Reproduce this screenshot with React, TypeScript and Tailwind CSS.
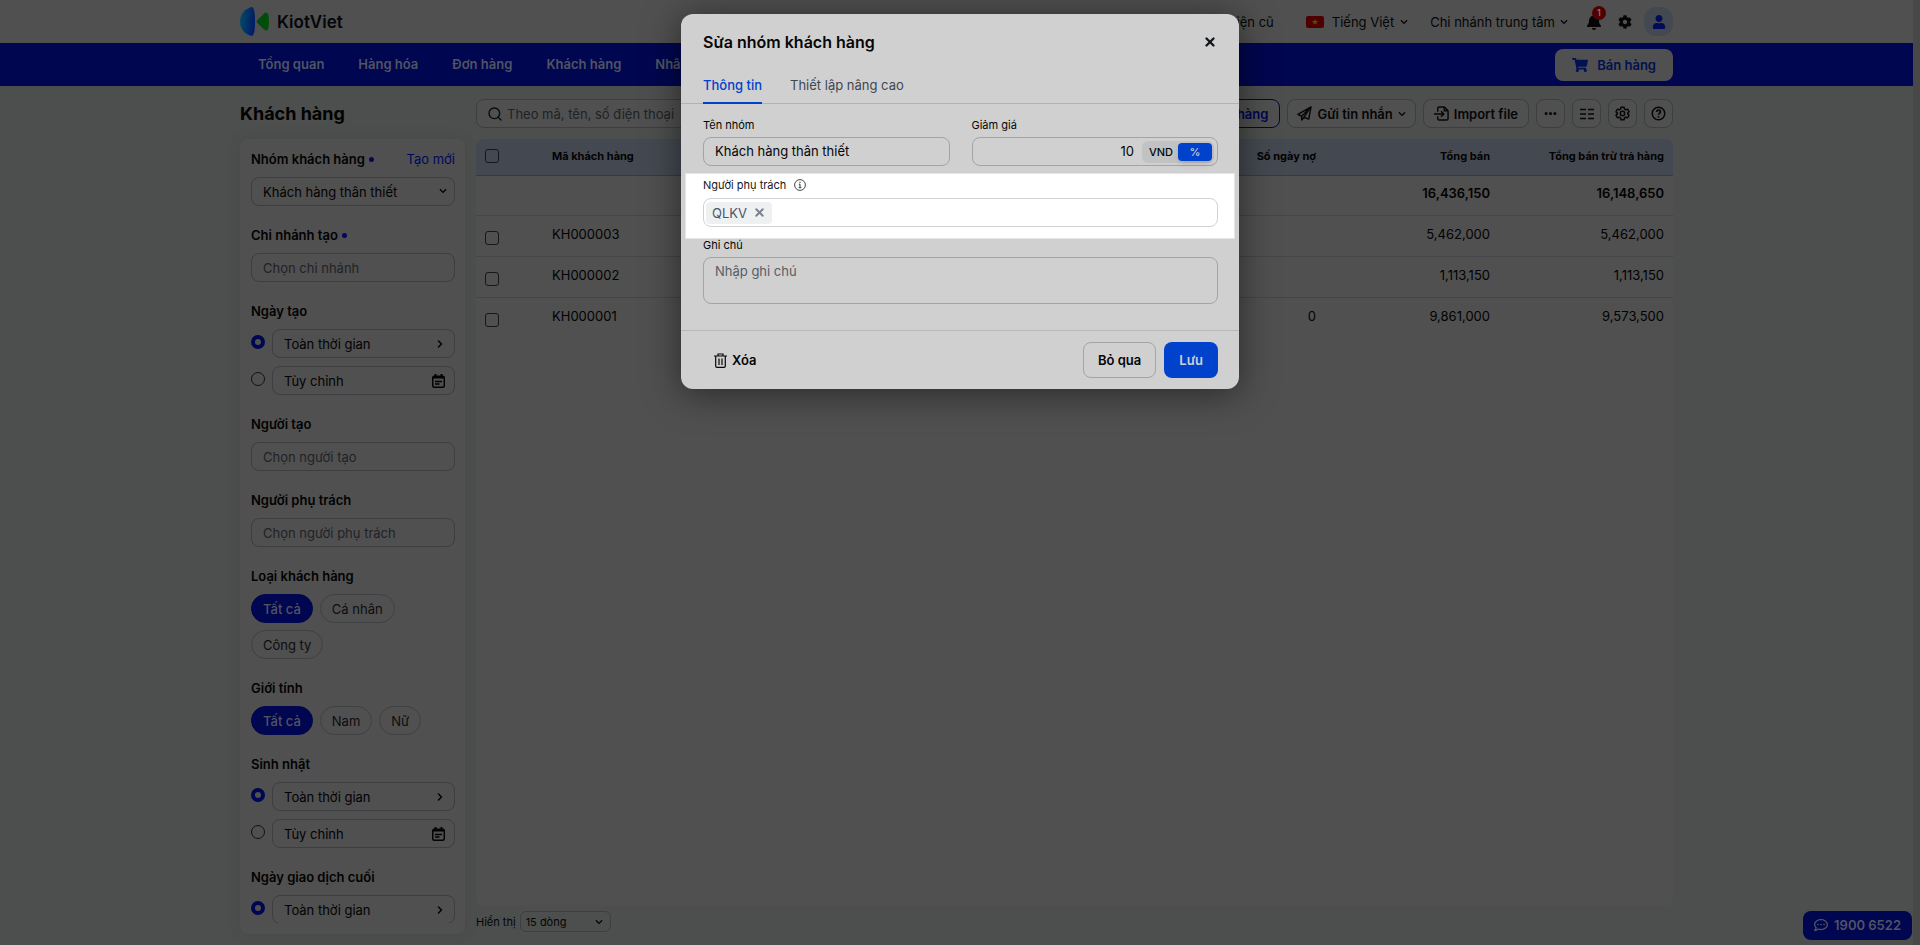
import { useState } from 'react';
import type { ReactNode } from 'react';
import { FaShoppingCart, FaUser, FaCog, FaRegCommentDots, FaBell, FaChevronDown } from 'react-icons/fa';
import { Search, Ellipsis, X, ChevronRight } from 'lucide-react';

const navItems = ['Tổng quan', 'Hàng hóa', 'Đơn hàng', 'Khách hàng', 'Nhân viên'];

const rows = [
    { code: 'KH000003', days: '', total: '5,462,000', net: '5,462,000' },
    { code: 'KH000002', days: '', total: '1,113,150', net: '1,113,150' },
    { code: 'KH000001', days: '0', total: '9,861,000', net: '9,573,500' },
];

const Logo = () => (
    <a href="#" className="flex items-center gap-2">
        <svg width="29" height="29" viewBox="0 0 29 29" aria-hidden="true">
            <defs>
                <linearGradient id="logoBlue" x1="0" x2="1" y1="0.3" y2="0.5">
                    <stop offset="0" stopColor="#064a66" />
                    <stop offset="1" stopColor="#001a66" />
                </linearGradient>
            </defs>
            <path d="M11 0.2C13.6 -0.5 14.9 3 15 14.5C14.9 26 13.6 29.5 11 28.8C4.5 27 0 22 0 14.5S4.5 2 11 0.2Z" fill="url(#logoBlue)" />
            <path d="M17.3 13.2L24 6.5C26 4.6 27.7 5.2 28.3 8C29.2 12 29.2 17 28.3 21C27.7 23.8 26 24.4 24 22.5L17.3 15.8C16.5 15 16.5 14 17.3 13.2Z" fill="#004d08" />
        </svg>
        <span className="text-[17px] font-semibold text-[#04060c]">KiotViet</span>
    </a>
);

const TopBar = () => (
    <header className="flex h-[43px] shrink-0 items-center justify-between bg-[#505050] px-60">
        <Logo />
        <div className="flex items-center text-[#050505]">
            <a href="#" className="mr-8">Giao diện cũ</a>
            <button type="button" className="mr-[22px] flex items-center gap-1.5">
                <svg width="18" height="12" viewBox="0 0 18 12" className="mr-0.5" aria-hidden="true">
                    <rect width="18" height="12" rx="2" fill="#4e0000" />
                    <path d="M9 2.8l.9 2.2h2.300l-1.800 1.400.7 2.300L9 7.300 6.900 8.700l.7-2.300L5.800 5h2.300z" fill="#5c4a00" />
                </svg>
                Tiếng Việt
                <FaChevronDown size={8} />
            </button>
            <button type="button" className="mr-[18px] flex items-center gap-[5px]">
                Chi nhánh trung tâm
                <FaChevronDown size={8} />
            </button>
            <button type="button" aria-label="Thông báo" className="relative mr-4">
                <FaBell size={16} />
                <span className="absolute -top-2 left-1.5 flex size-3.5 items-center justify-center rounded-full bg-[#500000] text-[9px] font-semibold text-[#777]">1</span>
            </button>
            <button type="button" aria-label="Thiết lập" className="mr-3"><FaCog size={14} /></button>
            <button type="button" aria-label="Tài khoản" className="flex size-[29px] items-center justify-center rounded-xl bg-[#444951] text-[#000c58]">
                <FaUser size={14} />
            </button>
        </div>
    </header>
);

const NavBar = () => (
    <nav className="flex h-[43px] shrink-0 items-center justify-between bg-[#00064f] px-60">
        <div className="flex pb-px pl-px">
            {navItems.map(item => (
                <a key={item} href="#" className="px-[17px] font-semibold text-[#505463]">{item}</a>
            ))}
        </div>
        <button type="button" className="flex h-8 items-center gap-[9px] rounded-lg bg-[#505050] px-[17px] font-semibold text-[#00124f]">
            <FaShoppingCart size={16} />
            Bán hàng
        </button>
    </nav>
);

const ToolButton = ({ label, children }: { label: string; children: ReactNode }) => (
    <button type="button" aria-label={label} className="flex size-[29px] items-center justify-center rounded-lg border border-[#3c3e42] bg-[#505050]">
        {children}
    </button>
);

const Toolbar = () => (
    <div className="flex items-center gap-[11px]">
        <h1 className="w-[225px] shrink-0 text-lg leading-7 font-bold text-[#020202]">Khách hàng</h1>
        <div className="flex min-w-0 flex-1 items-center justify-between">
            <label className="flex h-[29px] w-96 items-center gap-1 rounded-lg border border-[#3c3e42] bg-[#505050] pl-2.5">
                <Search size={16} className="text-[#08090b]" />
                <input type="text" aria-label="Tìm kiếm" placeholder="Theo mã, tên, số điện thoại" className="min-w-0 flex-1 outline-none placeholder:text-[#202226]" />
            </label>
            <div className="flex gap-[7px] text-[#050607]">
                <button type="button" className="h-[29px] rounded-lg border border-[#00064f] bg-[#505050] px-[11px] font-semibold text-[#00064f]">+ Khách hàng</button>
                <button type="button" className="flex h-[29px] items-center gap-[5px] rounded-lg border border-[#3c3e42] bg-[#505050] px-[9px] font-semibold">
                    <svg width="15" height="15" viewBox="0 0 16 16" fill="none" stroke="currentColor" strokeWidth="1.5" strokeLinejoin="round" aria-hidden="true">
                        <path d="M15 1L1 9l4 2 8.5-8.500L7.500 11.800 12.500 14 15 1zM5 11v4l2.500-3" />
                    </svg>
                    Gửi tin nhắn
                    <FaChevronDown size={8} />
                </button>
                <button type="button" className="flex h-[29px] items-center gap-[5px] rounded-lg border border-[#3c3e42] bg-[#505050] px-2.5 font-semibold">
                    <svg width="15" height="15" viewBox="0 0 16 16" fill="none" stroke="currentColor" strokeWidth="1.5" aria-hidden="true">
                        <path d="M4 6V2.500Q4 1 5.500 1H11l4 4v8.500q0 1.500-1.500 1.500h-8Q4 15 4 13.500V11M0 8.500h10M7.500 5.500l3 3-3 3M11 1v4h4" />
                    </svg>
                    Import file
                </button>
                <ToolButton label="Thêm"><Ellipsis size={15} strokeWidth={3} /></ToolButton>
                <ToolButton label="Cột hiển thị">
                    <svg width="14" height="12" viewBox="0 0 14 12" stroke="currentColor" strokeWidth="1.300" aria-hidden="true">
                        <path d="M0 1.500h6M8 1.500h6M0 6h6M8 6h6M0 10.500h6M8 10.500h6" />
                    </svg>
                </ToolButton>
                <ToolButton label="Tùy chỉnh">
                    <svg width="15" height="15" viewBox="0 0 24 24" fill="none" stroke="currentColor" strokeWidth="2.400" strokeLinejoin="round" aria-hidden="true">
                        <path d="M9.500 2h5l.7 3 2 1.100 3-.9 2.300 4-2.200 2.200v1.200l2.200 2.200-2.300 4-3-.9-2 1.100-.7 3h-5l-.7-3-2-1.100-3 .9-2.300-4 2.200-2.200v-1.200L1.500 9.200l2.300-4 3 .9 2-1.100z" />
                        <circle cx="12" cy="12" r="3.500" />
                    </svg>
                </ToolButton>
                <ToolButton label="Trợ giúp">
                    <svg width="15" height="15" viewBox="0 0 24 24" fill="none" stroke="currentColor" aria-hidden="true">
                        <circle cx="12" cy="12" r="10" strokeWidth="2.400" />
                        <path d="M9 9.500c0-4 6-3.800 6 0 0 2.200-3 2.200-3 4.500M12 16v2.500" strokeWidth="2.600" />
                    </svg>
                </ToolButton>
            </div>
        </div>
    </div>
);

const Section = ({ title, dot, action, children }: { title: string; dot?: boolean; action?: string; children: ReactNode }) => (
    <section className="mb-5 last:mb-0">
        <div className="mb-[9px] flex h-[18px] items-center justify-between">
            <h2 className="flex items-center gap-1 font-semibold text-[#020202]">
                {title}
                {dot && <span className="size-[5px] rounded-full bg-[#00085c]" />}
            </h2>
            {action && <a href="#" className="text-[#00085c]">{action}</a>}
        </div>
        {children}
    </section>
);

const FilterInput = ({ placeholder }: { placeholder: string }) => (
    <input
        type="text"
        aria-label={placeholder}
        placeholder={placeholder}
        className="block h-[29px] w-full rounded-lg border border-[#3c3e42] px-[11px] outline-none placeholder:text-[#202226]"
    />
);

const CalendarIcon = () => (
    <svg width="13" height="14" viewBox="0 0 13 14" fill="none" stroke="currentColor" strokeWidth="1.500" aria-hidden="true">
        <rect x="0.750" y="2.250" width="11.500" height="11" rx="1.500" />
        <path d="M1 3.500h11M3.500 0v3M9.500 0v3" strokeWidth="2" />
        <path d="M3 7.500h7M3 10h4.500" />
    </svg>
);

const DateFilter = ({ name, options = ['Toàn thời gian', 'Tùy chỉnh'] }: { name: string; options?: string[] }) => (
    <div className="space-y-2">
        {options.map((label, i) => (
            <div key={label} className="flex items-center gap-[7px]">
                <input
                    type="radio"
                    name={name}
                    aria-label={label}
                    defaultChecked={i === 0}
                    className="mb-1 size-3.5 shrink-0 appearance-none rounded-full border border-[#101217] checked:border-4 checked:border-[#000752]"
                />
                <button type="button" className="flex h-[29px] flex-1 items-center justify-between rounded-lg border border-[#3c3e42] pr-[9px] pl-[11px] text-[#020202]">
                    {label}
                    {i === 0 ? <ChevronRight size={12} strokeWidth={3} className="-mr-px" /> : <CalendarIcon />}
                </button>
            </div>
        ))}
    </div>
);

const Pills = ({ items }: { items: string[] }) => {
    const [active, setActive] = useState(items[0]);
    return (
        <div className="flex flex-wrap gap-[7px]">
            {items.map(item => (
                <button
                    key={item}
                    type="button"
                    onClick={() => setActive(item)}
                    className={`h-[29px] rounded-full border px-[11px] ${item === active ? 'border-[#00064f] bg-[#00064f] font-medium text-[#505463]' : 'border-[#3f4042] text-[#0c0d10]'}`}
                >
                    {item}
                </button>
            ))}
        </div>
    );
};

const Sidebar = () => (
    <aside className="flex w-[225px] shrink-0 flex-col rounded-lg bg-[#505050] py-[11px] pr-2.5 pl-[11px] shadow-[0_0_16px_rgba(0,0,0,0.08)]">
        <div className="min-h-0 flex-1 overflow-hidden">
            <Section title="Nhóm khách hàng" dot action="Tạo mới">
                <div className="relative">
                    <select aria-label="Nhóm khách hàng" className="block h-[29px] w-full appearance-none rounded-lg border border-[#3c3e42] px-[11px] text-[#020202]">
                        <option>Khách hàng thân thiết</option>
                    </select>
                    <FaChevronDown size={8} className="pointer-events-none absolute top-2.5 right-2" />
                </div>
            </Section>
            <Section title="Chi nhánh tạo" dot><FilterInput placeholder="Chọn chi nhánh" /></Section>
            <Section title="Ngày tạo"><DateFilter name="created" /></Section>
            <Section title="Người tạo"><FilterInput placeholder="Chọn người tạo" /></Section>
            <Section title="Người phụ trách"><FilterInput placeholder="Chọn người phụ trách" /></Section>
            <Section title="Loại khách hàng"><Pills items={['Tất cả', 'Cá nhân', 'Công ty']} /></Section>
            <Section title="Giới tính"><Pills items={['Tất cả', 'Nam', 'Nữ']} /></Section>
            <Section title="Sinh nhật"><DateFilter name="birthday" /></Section>
            <Section title="Ngày giao dịch cuối"><DateFilter name="lastDeal" options={['Toàn thời gian']} /></Section>
        </div>
    </aside>
);

const CheckBox = ({ label }: { label: string }) => (
    <input type="checkbox" aria-label={label} className="block size-3.5 appearance-none rounded-[3px] border border-[#14171b]" />
);

const CustomerTable = () => (
    <div className="min-h-0 flex-1 overflow-hidden rounded-lg bg-[#505050]">
        <table className="w-full table-fixed text-[#020202]">
            <colgroup>
                <col className="w-[67px]" />
                <col />
                <col className="w-[174px]" />
                <col className="w-[174px]" />
                <col className="w-[174px]" />
            </colgroup>
            <thead>
                <tr className="h-9 border-b border-[#303c4c] bg-[#444951] text-[11px]">
                    <th className="pb-0.5 pl-[9px]"><CheckBox label="Chọn tất cả" /></th>
                    <th className="pb-0.5 pl-[9px] text-left">Mã khách hàng</th>
                    <th className="pr-[9px] pb-0.5 text-right">Số ngày nợ</th>
                    <th className="pr-[9px] pb-0.5 text-right">Tổng bán</th>
                    <th className="pr-[9px] pb-0.5 text-right">Tổng bán trừ trả hàng</th>
                </tr>
            </thead>
            <tbody>
                <tr className="h-10 border-b border-[#444546] font-semibold">
                    <td colSpan={3} />
                    <td className="pr-[9px] pb-1 text-right">16,436,150</td>
                    <td className="pr-[9px] pb-1 text-right">16,148,650</td>
                </tr>
                {rows.map(row => (
                    <tr key={row.code} className="h-[41px] border-b border-[#444546] last:border-0">
                        <td className="pt-1 pl-[9px]"><CheckBox label={row.code} /></td>
                        <td className="pb-1 pl-[9px]">{row.code}</td>
                        <td className="pr-[9px] pb-1 text-right">{row.days}</td>
                        <td className="pr-[9px] pb-1 text-right">{row.total}</td>
                        <td className="pr-[9px] pb-1 text-right">{row.net}</td>
                    </tr>
                ))}
            </tbody>
        </table>
    </div>
);

const EditGroupModal = () => {
    const [tab, setTab] = useState('Thông tin');
    const [unit, setUnit] = useState('%');

    return (
        <div role="dialog" aria-label="Sửa nhóm khách hàng" className="absolute top-3.5 left-1/2 w-[558px] -translate-x-1/2 rounded-xl bg-[#d0d0d0] text-[#050607] shadow-[0_4px_36px_rgba(0,0,0,0.5)]">
            <div className="flex h-14 items-center justify-between px-[22px]">
                <h2 className="text-base font-semibold">Sửa nhóm khách hàng</h2>
                <button type="button" aria-label="Đóng" className="text-[#12161c]"><X size={14} strokeWidth={4} /></button>
            </div>
            <div role="tablist" className="flex h-[34px] gap-7 border-b border-[#b0b2b4] px-[22px]">
                {['Thông tin', 'Thiết lập nâng cao'].map(name => (
                    <button
                        key={name}
                        type="button"
                        role="tab"
                        aria-selected={tab === name}
                        onClick={() => setTab(name)}
                        className={`-mb-px border-b-2 pb-0.5 ${tab === name ? 'border-[#0042cc] font-medium text-[#0042cc]' : 'border-transparent text-[#3f4750]'}`}
                    >
                        {name}
                    </button>
                ))}
            </div>

            <div className="grid grid-cols-2 gap-x-[22px] pt-3 pr-[21px] pl-[22px]">
                <div>
                    <label htmlFor="groupName" className="block h-[21px] text-[11px] leading-[18px]">Tên nhóm</label>
                    <input id="groupName" defaultValue="Khách hàng thân thiết" className="block h-[29px] w-full rounded-lg border border-[#a2a4a8] px-[11px] pb-0.5 outline-none" />
                </div>
                <div>
                    <label htmlFor="discount" className="block h-[21px] text-[11px] leading-[18px]">Giảm giá</label>
                    <div className="flex h-[29px] items-center rounded-lg border border-[#a2a4a8] pr-[3px]">
                        <input id="discount" defaultValue="10" className="min-w-0 flex-1 pr-2 pb-0.5 text-right outline-none" />
                        <div className="flex h-[22px] items-start rounded-md bg-[#c0c2c4] p-0.5 text-[11px] font-medium">
                            {['VND', '%'].map(u => (
                                <button
                                    key={u}
                                    type="button"
                                    onClick={() => setUnit(u)}
                                    className={`h-[18px] w-[34px] rounded-sm ${u === unit ? 'bg-[#0042cc] text-[#d0d0d0] shadow-md' : ''}`}
                                >
                                    {u}
                                </button>
                            ))}
                        </div>
                    </div>
                </div>
            </div>

            <div className="mx-1 mt-[7px] h-[66px] border border-[#e4e4e4] bg-white pt-[3px] pr-4 pl-[17px]">
                <label htmlFor="assignee" className="flex h-[21px] items-center gap-2 pb-1.5 text-[11px] text-[#15171a]">
                    Người phụ trách
                    <svg width="12" height="12" viewBox="0 0 12 12" fill="none" stroke="#30343a" aria-hidden="true">
                        <circle cx="6" cy="6" r="5.400" strokeWidth="0.900" />
                        <path d="M6 2.700v1.300M4.900 5.200H6v3.300M4.700 8.700h2.700" />
                    </svg>
                </label>
                <div className="flex h-[29px] items-center rounded-lg border border-[#d0d2d8] px-0.5">
                    <span className="flex h-[22px] items-center gap-1.5 rounded bg-[#eef0f2] px-1.5 text-[#4b5563]">
                        QLKV
                        <button type="button" aria-label="Bỏ QLKV" className="text-[#7a828e]"><X size={13} strokeWidth={3.5} /></button>
                    </span>
                    <input id="assignee" className="min-w-0 flex-1 outline-none" />
                </div>
            </div>

            <div className="pr-[21px] pb-[26px] pl-[22px]">
                <label htmlFor="note" className="block h-[18px] text-[11px] leading-3">Ghi chú</label>
                <textarea id="note" placeholder="Nhập ghi chú" className="block h-[47px] w-full resize-none rounded-lg border border-[#a2a4a8] px-[11px] py-1 outline-none placeholder:text-[#565d68]" />
            </div>

            <div className="flex items-center gap-2 border-t border-[#b8b9ba] py-[11px] pr-[21px] pl-[22px] font-semibold">
                <button type="button" className="mr-auto flex h-9 items-center gap-[5px] px-[11px]">
                    <svg width="13" height="15" viewBox="0 0 13 15" fill="none" stroke="currentColor" strokeWidth="1.200" aria-hidden="true">
                        <path d="M0 3h13M4 3V1h5v2M1.700 3v10q0 1.300 1.300 1.300h7q1.300 0 1.300-1.300V3M5 5.500v6.500M8 5.500v6.500" />
                    </svg>
                    Xóa
                </button>
                <button type="button" className="h-9 rounded-lg border border-[#a2a4a8] px-3.5">Bỏ qua</button>
                <button type="button" className="h-9 rounded-lg bg-[#0042cc] px-[15px] text-[#d0d0d0]">Lưu</button>
            </div>
        </div>
    );
};

export default function App() {
    return (
        <div className="relative flex h-screen overflow-hidden bg-[#484848] pr-[7px] font-['Inter','Liberation_Sans',sans-serif] text-[13px] leading-[18px]">
            <div className="flex min-w-0 flex-1 flex-col bg-[#4c4f4d]">
                <TopBar />
                <NavBar />
                <main className="flex min-h-0 flex-1 flex-col gap-[11px] px-60 pt-[13px] pb-[11px]">
                    <Toolbar />
                    <div className="flex min-h-0 flex-1 gap-[11px]">
                        <Sidebar />
                        <div className="flex min-w-0 flex-1 flex-col">
                            <CustomerTable />
                            <div className="mt-[5px] mb-0.5 flex items-center gap-1 text-[11px] text-[#050505]">
                                <label htmlFor="pageSize">Hiển thị</label>
                                <div className="relative">
                                    <select id="pageSize" className="block h-[21px] w-[91px] appearance-none rounded-md border border-[#3c3e42] px-[5px]">
                                        <option>15 dòng</option>
                                    </select>
                                    <FaChevronDown size={8} className="pointer-events-none absolute top-[7px] right-2" />
                                </div>
                            </div>
                        </div>
                    </div>
                </main>
            </div>
            <button type="button" className="absolute right-2 bottom-[5px] flex h-[29px] items-center gap-1.5 rounded-lg bg-[#00064f] px-[11px] pb-px font-semibold text-[#505463]">
                <FaRegCommentDots size={14} />
                1900 6522
            </button>
            <EditGroupModal />
        </div>
    );
}
